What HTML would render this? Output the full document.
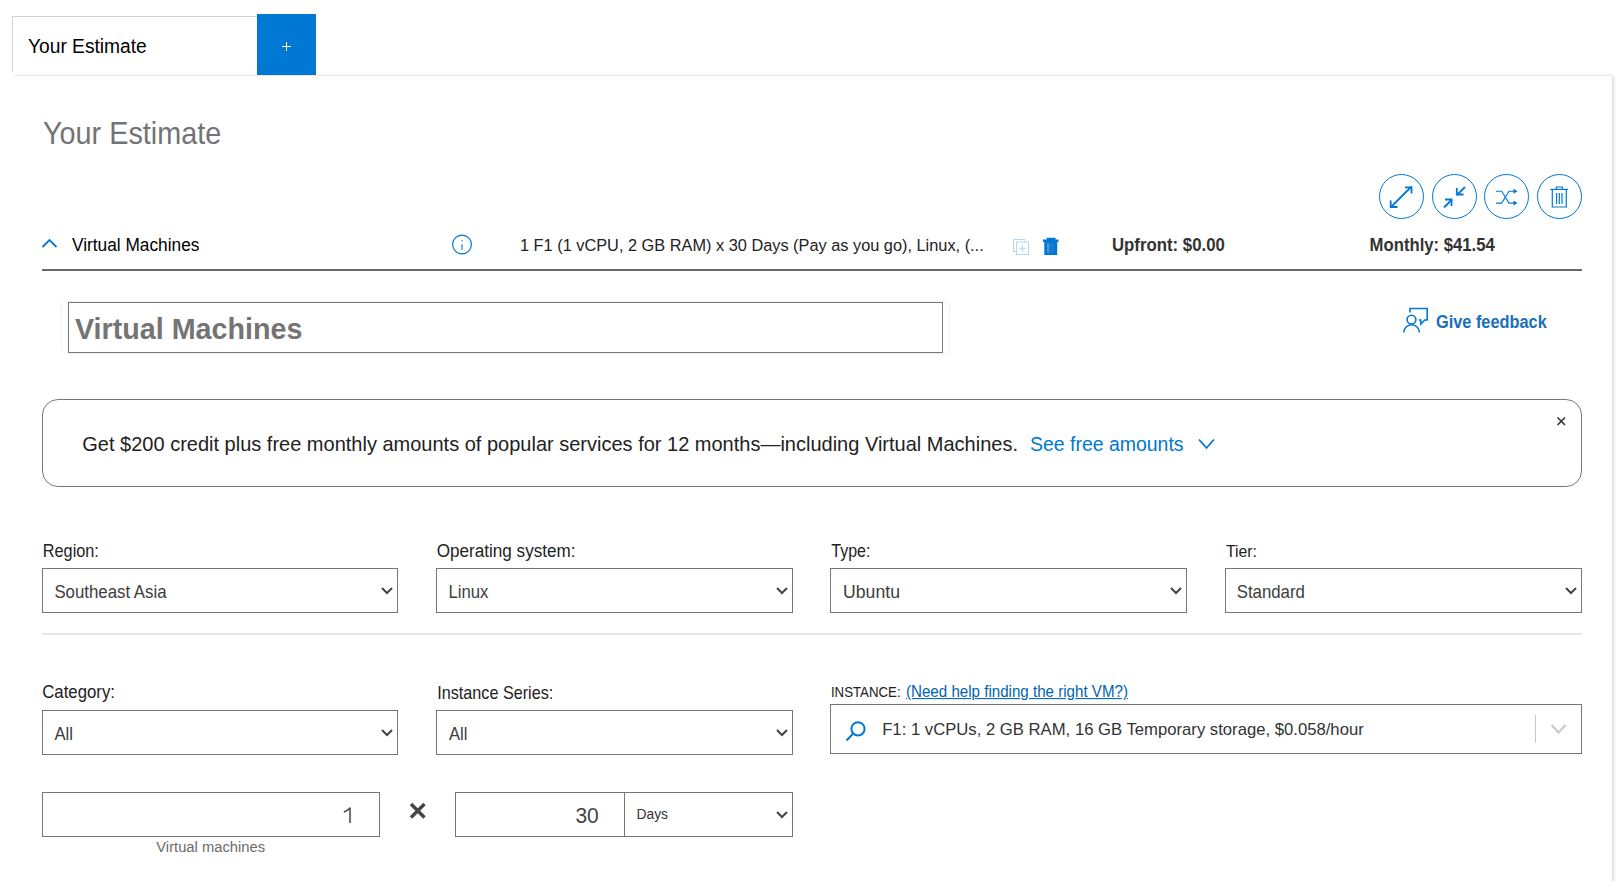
<!DOCTYPE html>
<html><head><meta charset="utf-8"><style>
html,body{margin:0;padding:0;width:1620px;height:881px;overflow:hidden;background:#fff;font-family:"Liberation Sans",sans-serif}
.t{position:absolute;white-space:nowrap;line-height:1}
</style></head><body>
<div style="position:absolute;left:12px;top:16px;width:245px;height:56px;border-left:1px solid #d2d2d2;border-top:1px solid #d2d2d2;box-sizing:border-box;background:#fff"></div>
<div class="t" style="left:28.00px;top:36.75px;font-size:19.2px;font-weight:400;color:#000;transform:scaleY(1.06);transform-origin:0 16.25px;">Your Estimate</div>
<div style="position:absolute;left:257px;top:14px;width:59px;height:61px;background:#0078d4"></div>
<div style="position:absolute;left:282px;top:46px;width:9px;height:1.4px;background:#fff"></div>
<div style="position:absolute;left:285.8px;top:42px;width:1.4px;height:9px;background:#fff"></div>
<div style="position:absolute;left:12px;top:76px;width:1600px;height:900px;background:#fff;box-shadow:1.5px 0 3px rgba(0,0,0,0.16),0 -1px 1.5px rgba(0,0,0,0.03)"></div>
<div class="t" style="left:43.00px;top:119.62px;font-size:28.8px;font-weight:400;color:#737373;transform:scaleY(1.06);transform-origin:0 24.38px;">Your Estimate</div>
<div style="position:absolute;left:1379px;top:174px;width:45px;height:45px;border:1.2px solid #0078d4;border-radius:50%;box-sizing:border-box"></div>
<div style="position:absolute;left:1432px;top:174px;width:45px;height:45px;border:1.2px solid #0078d4;border-radius:50%;box-sizing:border-box"></div>
<div style="position:absolute;left:1484px;top:174px;width:45px;height:45px;border:1.2px solid #0078d4;border-radius:50%;box-sizing:border-box"></div>
<div style="position:absolute;left:1537px;top:174px;width:45px;height:45px;border:1.2px solid #0078d4;border-radius:50%;box-sizing:border-box"></div>
<svg style="position:absolute;left:0px;top:0px;overflow:visible" width="1" height="1" viewBox="0 0 1 1"><g fill="none" stroke="#0078d4" stroke-width="1.8"><path d="M1391 207 L1411.5 186.5"/><path d="M1405 187.3 H1411.5 V193.5"/><path d="M1390.7 200.5 V207 H1397.5"/></g></svg>
<svg style="position:absolute;left:0px;top:0px;overflow:visible" width="1" height="1" viewBox="0 0 1 1"><g fill="none" stroke="#0078d4" stroke-width="1.8"><path d="M1465 187 L1457 195"/><path d="M1456.8 188 V194.5 H1463.5"/><path d="M1444 207.5 L1452 199.5"/><path d="M1445 199.5 H1451.5 V206"/></g></svg>
<svg style="position:absolute;left:0px;top:0px;overflow:visible" width="1" height="1" viewBox="0 0 1 1"><g fill="none" stroke="#0078d4" stroke-width="1.1"><path d="M1496 191.3 H1501.7 L1509 203.1 H1514"/><path d="M1496 203.1 H1501.7 L1509 191.3 H1514"/></g><path d="M1513.5 188.8 L1517.5 191.3 L1513.5 193.8Z M1513.5 200.6 L1517.5 203.1 L1513.5 205.6Z" fill="#0078d4"/></svg>
<svg style="position:absolute;left:0px;top:0px;overflow:visible" width="1" height="1" viewBox="0 0 1 1"><g fill="none" stroke="#0078d4" stroke-width="1.2"><path d="M1550.3 189.4 H1568"/><path d="M1552.3 189.4 V207 H1566.3 V189.4"/><path d="M1556.3 189.4 V187 H1562.3 V189.4"/><path d="M1556.6 193 V204 M1559.3 193 V204 M1562 193 V204"/></g></svg>
<svg style="position:absolute;left:0px;top:0px;overflow:visible" width="1" height="1" viewBox="0 0 1 1"><path d="M42.5 247 L49.5 240 L56.5 247" fill="none" stroke="#0078d4" stroke-width="1.8"/></svg>
<div class="t" style="left:72.00px;top:237.36px;font-size:17.3px;font-weight:400;color:#000;transform:scaleY(1.06);transform-origin:0 14.64px;">Virtual Machines</div>
<svg style="position:absolute;left:0px;top:0px;overflow:visible" width="1" height="1" viewBox="0 0 1 1"><circle cx="462" cy="244.5" r="9.4" fill="none" stroke="#0078d4" stroke-width="1.2"/><rect x="461.45" y="240" width="1.1" height="1.3" fill="#0078d4"/><rect x="461.45" y="244.2" width="1.1" height="5.6" fill="#0078d4"/></svg>
<div class="t" style="left:520.00px;top:237.18px;font-size:16.33px;font-weight:400;color:#222;transform:scaleY(1.06);transform-origin:0 13.82px;">1 F1 (1 vCPU, 2 GB RAM) x 30 Days (Pay as you go), Linux, (...</div>
<svg style="position:absolute;left:0px;top:0px;overflow:visible" width="1" height="1" viewBox="0 0 1 1"><g fill="none" stroke="#b5d5f1" stroke-width="1"><path d="M1016 251.5 H1013.5 V239.5 H1025 V242"/><rect x="1016.5" y="242" width="12" height="12.5"/><path d="M1022.5 244.5 V252 M1019 248.3 H1026"/></g></svg>
<svg style="position:absolute;left:0px;top:0px;overflow:visible" width="1" height="1" viewBox="0 0 1 1"><path d="M1043 239.4 H1058.5 V242 H1043Z M1046.7 237.8 H1055.6 V240 H1046.7Z M1044.3 241.9 H1057.2 V255 H1044.3Z" fill="#0078d4"/><rect x="1047.5" y="243.2" width="6.5" height="9.5" fill="#1a7ad6"/><rect x="1047.5" y="243.2" width="1" height="9.5" fill="#7fb6e8"/></svg>
<div class="t" style="left:1112.00px;top:237.78px;font-size:16.8px;font-weight:700;color:#333;transform:scaleY(1.06);transform-origin:0 14.22px;">Upfront: $0.00</div>
<div class="t" style="left:1369.60px;top:237.86px;font-size:16.7px;font-weight:700;color:#333;transform:scaleY(1.06);transform-origin:0 14.14px;">Monthly: $41.54</div>
<div style="position:absolute;left:42px;top:269px;width:1540px;height:2px;background:#68676c"></div>
<div style="position:absolute;left:61px;top:301px;width:889px;height:53px;border:1px solid #f2f3f6;border-radius:6px;box-sizing:border-box"></div>
<div style="position:absolute;left:68px;top:302px;width:875px;height:51px;border:1px solid #77767b;box-sizing:border-box"></div>
<div class="t" style="left:75.00px;top:314.91px;font-size:28.7px;font-weight:700;color:#747474;transform:scaleY(1.06);transform-origin:0 24.29px;">Virtual Machines</div>
<svg style="position:absolute;left:0px;top:0px;overflow:visible" width="1" height="1" viewBox="0 0 1 1"><g fill="none" stroke="#0078d4" stroke-width="1.6"><path d="M1410 312.5 V308.5 H1427.2 V320 H1424.8 L1420.8 324 V320 H1418.8"/><circle cx="1411.5" cy="319.6" r="4.4"/><path d="M1403.8 332.5 A7.8 7.8 0 0 1 1419.4 332.5"/></g></svg>
<div class="t" style="left:1436.00px;top:314.48px;font-size:16.33px;font-weight:700;color:#1a6fb8;transform:scaleY(1.14);transform-origin:0 13.82px;">Give feedback</div>
<div style="position:absolute;left:42px;top:399px;width:1540px;height:88px;border:1px solid #77767b;border-radius:16px;box-sizing:border-box"></div>
<div class="t" style="left:82.30px;top:434.07px;font-size:20px;font-weight:400;color:#222;transform:scaleY(1.02);transform-origin:0 16.93px;">Get $200 credit plus free monthly amounts of popular services for 12 months—including Virtual Machines.</div>
<div class="t" style="left:1030.00px;top:434.52px;font-size:19.47px;font-weight:400;color:#0078d4;transform:scaleY(1.02);transform-origin:0 16.48px;">See free amounts</div>
<svg style="position:absolute;left:0px;top:0px;overflow:visible" width="1" height="1" viewBox="0 0 1 1"><path d="M1199 439.5 L1206.5 448 L1214 439.5" fill="none" stroke="#0078d4" stroke-width="1.8"/></svg>
<svg style="position:absolute;left:0px;top:0px;overflow:visible" width="1" height="1" viewBox="0 0 1 1"><path d="M1557.5 417.5 L1565 425 M1565 417.5 L1557.5 425" fill="none" stroke="#333" stroke-width="1.6"/></svg>
<div class="t" style="left:42.80px;top:543.22px;font-size:16.28px;font-weight:400;color:#222;transform:scaleY(1.1);transform-origin:0 13.78px;">Region:</div>
<div style="position:absolute;left:42px;top:568px;width:356px;height:45px;border:1px solid #77767b;box-sizing:border-box;background:#fff"></div>
<svg style="position:absolute;left:0px;top:0px;overflow:visible" width="1" height="1" viewBox="0 0 1 1"><path d="M382 588 L387 593 L392 588" fill="none" stroke="#444" stroke-width="2"/></svg>
<div class="t" style="left:54.40px;top:584.76px;font-size:16.82px;font-weight:400;color:#3d3d3d;transform:scaleY(1.06);transform-origin:0 14.24px;">Southeast Asia</div>
<div class="t" style="left:436.70px;top:542.50px;font-size:17.13px;font-weight:400;color:#222;transform:scaleY(1.1);transform-origin:0 14.50px;">Operating system:</div>
<div style="position:absolute;left:436px;top:568px;width:357px;height:45px;border:1px solid #77767b;box-sizing:border-box;background:#fff"></div>
<svg style="position:absolute;left:0px;top:0px;overflow:visible" width="1" height="1" viewBox="0 0 1 1"><path d="M777 588 L782 593 L787 588" fill="none" stroke="#444" stroke-width="2"/></svg>
<div class="t" style="left:448.40px;top:584.83px;font-size:16.74px;font-weight:400;color:#3d3d3d;transform:scaleY(1.06);transform-origin:0 14.17px;">Linux</div>
<div class="t" style="left:831.30px;top:543.76px;font-size:15.99px;font-weight:400;color:#222;transform:scaleY(1.1);transform-origin:0 13.54px;">Type:</div>
<div style="position:absolute;left:830px;top:568px;width:357px;height:45px;border:1px solid #77767b;box-sizing:border-box;background:#fff"></div>
<svg style="position:absolute;left:0px;top:0px;overflow:visible" width="1" height="1" viewBox="0 0 1 1"><path d="M1171 588 L1176 593 L1181 588" fill="none" stroke="#444" stroke-width="2"/></svg>
<div class="t" style="left:843.10px;top:584.07px;font-size:17.64px;font-weight:400;color:#3d3d3d;transform:scaleY(1.06);transform-origin:0 14.93px;">Ubuntu</div>
<div class="t" style="left:1225.90px;top:543.60px;font-size:15.83px;font-weight:400;color:#222;transform:scaleY(1.1);transform-origin:0 13.40px;">Tier:</div>
<div style="position:absolute;left:1225px;top:568px;width:357px;height:45px;border:1px solid #77767b;box-sizing:border-box;background:#fff"></div>
<svg style="position:absolute;left:0px;top:0px;overflow:visible" width="1" height="1" viewBox="0 0 1 1"><path d="M1566 588 L1571 593 L1576 588" fill="none" stroke="#444" stroke-width="2"/></svg>
<div class="t" style="left:1236.70px;top:584.76px;font-size:16.82px;font-weight:400;color:#3d3d3d;transform:scaleY(1.06);transform-origin:0 14.24px;">Standard</div>
<div style="position:absolute;left:42px;top:633px;width:1540px;height:2px;background:#e6e7e9"></div>
<div class="t" style="left:42.20px;top:684.79px;font-size:16.79px;font-weight:400;color:#222;transform:scaleY(1.1);transform-origin:0 14.21px;">Category:</div>
<div style="position:absolute;left:42px;top:710px;width:356px;height:45px;border:1px solid #77767b;box-sizing:border-box;background:#fff"></div>
<svg style="position:absolute;left:0px;top:0px;overflow:visible" width="1" height="1" viewBox="0 0 1 1"><path d="M382 730 L387 735 L392 730" fill="none" stroke="#444" stroke-width="2"/></svg>
<div class="t" style="left:54.40px;top:726.89px;font-size:16.67px;font-weight:400;color:#3d3d3d;transform:scaleY(1.06);transform-origin:0 14.11px;">All</div>
<div class="t" style="left:437.30px;top:685.30px;font-size:16.18px;font-weight:400;color:#222;transform:scaleY(1.1);transform-origin:0 13.70px;">Instance Series:</div>
<div style="position:absolute;left:436px;top:710px;width:357px;height:45px;border:1px solid #77767b;box-sizing:border-box;background:#fff"></div>
<svg style="position:absolute;left:0px;top:0px;overflow:visible" width="1" height="1" viewBox="0 0 1 1"><path d="M777 730 L782 735 L787 730" fill="none" stroke="#444" stroke-width="2"/></svg>
<div class="t" style="left:449.00px;top:726.89px;font-size:16.67px;font-weight:400;color:#3d3d3d;transform:scaleY(1.06);transform-origin:0 14.11px;">All</div>
<div class="t" style="left:830.90px;top:686.08px;font-size:13.25px;font-weight:400;color:#222;transform:scaleY(1.1);transform-origin:0 11.22px;">INSTANCE:</div>
<div class="t" style="left:906.00px;top:684.19px;font-size:15.13px;font-weight:400;color:#0063b1;transform:scaleY(1.06);transform-origin:0 12.81px;text-decoration:underline">(Need help finding the right VM?)</div>
<div style="position:absolute;left:830px;top:704px;width:752px;height:50px;border:1px solid #77767b;box-sizing:border-box"></div>
<svg style="position:absolute;left:0px;top:0px;overflow:visible" width="1" height="1" viewBox="0 0 1 1"><g fill="none" stroke="#0078d4" stroke-width="2"><circle cx="858" cy="728.8" r="6.6"/><path d="M853.3 733.5 L846.5 740.5"/></g></svg>
<div class="t" style="left:882.20px;top:721.88px;font-size:16.68px;font-weight:400;color:#333;transform:scaleY(1.02);transform-origin:0 14.12px;">F1: 1 vCPUs, 2 GB RAM, 16 GB Temporary storage, $0.058/hour</div>
<div style="position:absolute;left:1534.5px;top:715px;width:1.6px;height:28px;background:#c8c8c8"></div>
<svg style="position:absolute;left:0px;top:0px;overflow:visible" width="1" height="1" viewBox="0 0 1 1"><path d="M1551.5 725 L1558.5 732.5 L1565.5 725" fill="none" stroke="#c8c8c8" stroke-width="2"/></svg>
<div style="position:absolute;left:42px;top:792px;width:338px;height:45px;border:1px solid #77767b;box-sizing:border-box"></div>
<svg style="position:absolute;left:0px;top:0px;overflow:visible" width="1" height="1" viewBox="0 0 1 1"><g fill="none" stroke="#444" stroke-width="1.5"><path d="M350 807.5 V823"/><path d="M350 808 C348.5 809.8 346.5 811 343.8 812"/></g></svg>
<svg style="position:absolute;left:0px;top:0px;overflow:visible" width="1" height="1" viewBox="0 0 1 1"><path d="M411 804 L424.5 817.5 M424.5 804 L411 817.5" fill="none" stroke="#444" stroke-width="3.4"/></svg>
<div style="position:absolute;left:455px;top:792px;width:338px;height:45px;border:1px solid #77767b;box-sizing:border-box"></div>
<div style="position:absolute;left:624px;top:792px;width:1px;height:45px;background:#77767b"></div>
<div class="t" style="left:575.40px;top:805.02px;font-size:21px;font-weight:400;color:#444;transform:scaleY(1.06);transform-origin:0 17.78px;">30</div>
<div class="t" style="left:636.40px;top:808.33px;font-size:13.9px;font-weight:400;color:#333;transform:scaleY(1.06);transform-origin:0 11.77px;">Days</div>
<svg style="position:absolute;left:0px;top:0px;overflow:visible" width="1" height="1" viewBox="0 0 1 1"><path d="M777 812 L782 817 L787 812" fill="none" stroke="#444" stroke-width="2"/></svg>
<div class="t" style="left:156.30px;top:839.71px;font-size:14.75px;font-weight:400;color:#6b6b6b;transform:scaleY(1.02);transform-origin:0 12.49px;">Virtual machines</div>
</body></html>
